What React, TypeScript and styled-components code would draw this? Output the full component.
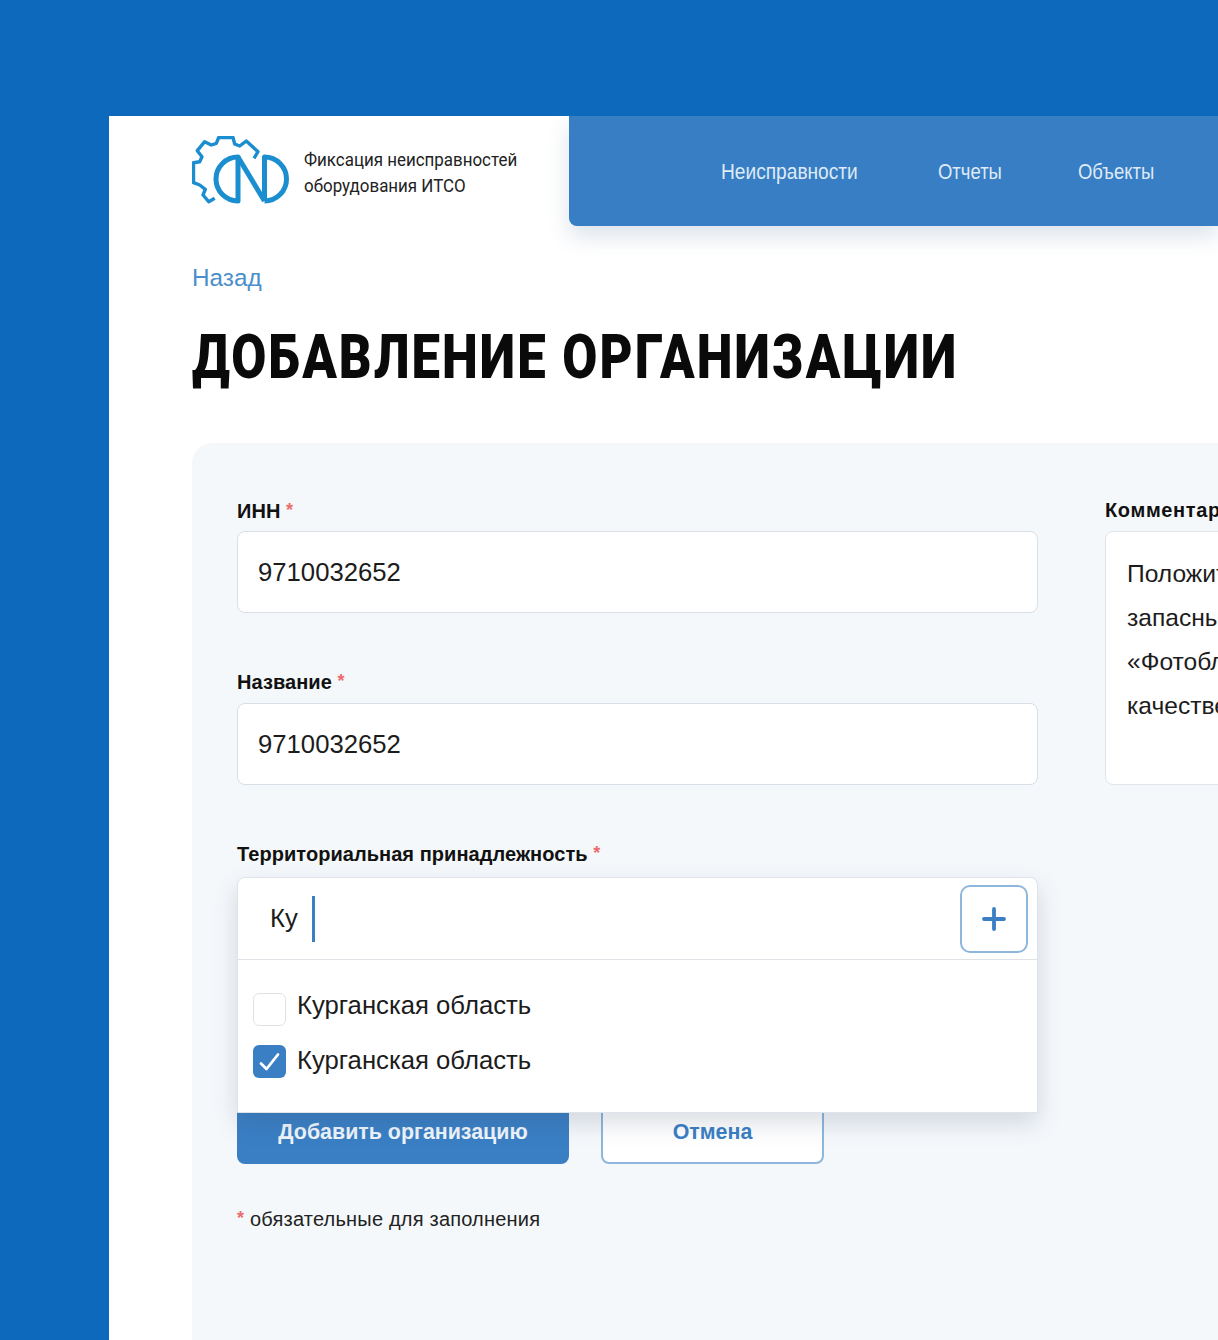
import React from "react";
import styled, { createGlobalStyle } from "styled-components";

const GlobalStyle = createGlobalStyle`
  html, body {
    margin: 0;
    padding: 0;
    background: #0d69bb;
  }
  body {
    font-family: "Liberation Sans", Arial, sans-serif;
    color: #111;
  }
`;

const Logo = () => (
  <svg width="98" height="70" viewBox="0 0 98 70" fill="none" stroke="#1b8ed0" strokeWidth="3.4" strokeLinejoin="round" style={{ flex: "none" }}>
    <path d="M22.7 62.3 L16.7 65.7 L11 59 L13.3 53.3 L7.7 49 L1.5 46.7 L1.5 26.7 L7.7 25.7 L10 20.7 L5.3 14.7 L12.7 5.7 L19.3 9 L24.3 7.3 L26.7 1.5 L41 1.5 L42.7 8 L47.7 10 L54.3 5 L66 15.7 L62 22.3" />
    <g strokeWidth="5">
      <path d="M46 21 A22 22 0 0 0 46 65 Z" />
      <path d="M46 21 L72.5 65" />
      <path d="M72.5 65 V21 A22 22 0 0 1 72.5 65" />
    </g>
  </svg>
);

const Check = () => (
  <svg width="33" height="33" viewBox="0 0 33 33" fill="none" stroke="#fff" strokeWidth="2.8" strokeLinecap="round" strokeLinejoin="round">
    <path d="M8 18.5 L13.5 24 L25 9.5" />
  </svg>
);

const Plus = () => (
  <svg width="24" height="24" viewBox="0 0 24 24" fill="none" stroke="#3a7fc4" strokeWidth="3.8" strokeLinecap="round">
    <path d="M12 2 V22 M2 12 H22" />
  </svg>
);

const App = () => (
  <Page>
    <GlobalStyle />
    <Sheet>
      <Header>
        <Brand>
          <Logo />
          <BrandText>
            Фиксация неисправностей
            <br />
            оборудования ИТСО
          </BrandText>
        </Brand>
        <Nav>
          <NavLink $wide>Неисправности</NavLink>
          <NavLink>Отчеты</NavLink>
          <NavLink>Объекты</NavLink>
        </Nav>
      </Header>
      <Content>
        <Back>Назад</Back>
        <Title>Добавление организации</Title>
        <Panel>
          <Columns>
            <Column>
              <Field>
                <Label>
                  ИНН <Star>*</Star>
                </Label>
                <Input>9710032652</Input>
              </Field>
              <Field>
                <Label $gap={10}>
                  Название <Star>*</Star>
                </Label>
                <Input>9710032652</Input>
              </Field>
              <SelectField>
                <Label $gap={12}>
                  Территориальная принадлежность <Star>*</Star>
                </Label>
                <Dropdown>
                  <SearchRow>
                    <SearchText>Ку</SearchText>
                    <Caret />
                    <AddButton>
                      <Plus />
                    </AddButton>
                  </SearchRow>
                  <Options>
                    <Option>
                      <Box />
                      <OptionText $lift={8}>Курганская область</OptionText>
                    </Option>
                    <Option>
                      <Box $checked>
                        <Check />
                      </Box>
                      <OptionText $lift={2}>Курганская область</OptionText>
                    </Option>
                  </Options>
                </Dropdown>
              </SelectField>
              <Actions>
                <PrimaryButton>Добавить организацию</PrimaryButton>
                <GhostButton>Отмена</GhostButton>
              </Actions>
              <Note>
                <Star>*</Star> обязательные для заполнения
              </Note>
            </Column>
            <Side>
              <CommentLabel>Комментарий</CommentLabel>
              <TextArea>
                <div>Положительный отзыв</div>
                <div>запасные части и ремонт</div>
                <div>«Фотоблок» высокого</div>
                <div>качестве</div>
              </TextArea>
            </Side>
          </Columns>
        </Panel>
      </Content>
    </Sheet>
  </Page>
);

export default App;

const Page = styled.div`
  width: 1218px;
  height: 1340px;
  overflow: hidden;
  padding: 116px 0 0 109px;
  box-sizing: border-box;
  background: #0d69bb;
`;

const Sheet = styled.div`
  width: 1109px;
  height: 1224px;
  background: #fff;
  overflow: hidden;
`;

const Header = styled.header`
  display: flex;
  height: 110px;
`;

const Brand = styled.div`
  width: 460px;
  flex: none;
  padding: 20px 0 0 83px;
  box-sizing: border-box;
  display: flex;
  align-items: flex-start;
  gap: 14px;
`;

const BrandText = styled.div`
  font-family: "Roboto", sans-serif;
  font-size: 18px;
  line-height: 26px;
  margin-top: 11px;
  color: #222;
  white-space: nowrap;
  transform: scaleX(0.94);
  transform-origin: left center;
`;

const Nav = styled.nav`
  flex: 1;
  height: 110px;
  background: #387ec4;
  border-radius: 0 0 0 8px;
  box-shadow: 0 10px 22px rgba(40, 80, 130, 0.16);
  display: grid;
  grid-template-columns: 217px 140px auto;
  align-items: center;
  padding: 2px 0 0 152px;
  box-sizing: border-box;
  white-space: nowrap;
`;

const NavLink = styled.a<{ $wide?: boolean }>`
  font-family: "Liberation Sans", Arial, sans-serif;
  font-size: 22px;
  color: #dfeaf6;
  transform: scaleX(${(p) => (p.$wide ? 0.87 : 0.84)});
  transform-origin: left center;
`;

const Content = styled.main`
  padding: 37px 0 0 83px;
`;

const Back = styled.a`
  display: block;
  font-size: 24.3px;
  line-height: 30px;
  color: #4a8fcb;
`;

const Title = styled.h1`
  margin: 28px 0 0;
  font-family: "Roboto", sans-serif;
  font-weight: 900;
  font-size: 62px;
  line-height: 72px;
  letter-spacing: 2.5px;
  text-transform: uppercase;
  color: #0a0a0a;
  white-space: nowrap;
  transform: scaleX(0.82);
  transform-origin: left center;
`;

const Panel = styled.section`
  margin-top: 50px;
  width: 1100px;
  height: 900px;
  background: #f5f8fb;
  border-radius: 20px 0 0 0;
  padding: 55px 0 0 45px;
  box-sizing: border-box;
`;

const Columns = styled.div`
  display: flex;
  gap: 67px;
`;

const Column = styled.div`
  width: 801px;
  flex: none;
`;

const Side = styled.div`
  width: 400px;
  flex: none;
`;

const Field = styled.div`
  margin-bottom: 56px;
`;

const SelectField = styled.div`
  position: relative;
  height: 259px;
  z-index: 2;
`;

const Label = styled.div<{ $gap?: number }>`
  height: 24px;
  font-size: 20px;
  line-height: 24px;
  font-weight: 700;
  letter-spacing: 0.05px;
  margin-bottom: ${(p) => p.$gap ?? 9}px;
  color: #111;
  white-space: nowrap;
`;

const CommentLabel = styled(Label)`
  letter-spacing: 0.65px;
`;

const Star = styled.span`
  color: #ec6c6c;
  font-weight: 700;
  font-size: 18px;
  vertical-align: 2px;
`;

const Input = styled.div`
  height: 82px;
  box-sizing: border-box;
  background: #fff;
  border: 1px solid #d9dfe7;
  border-radius: 8px;
  padding: 0 20px;
  display: flex;
  align-items: center;
  font-size: 25.7px;
  color: #1c1c1c;
`;

const Dropdown = styled.div`
  background: #fff;
  border: 1px solid #dfe4ea;
  border-radius: 8px 8px 0 0;
  box-shadow: 0 10px 24px rgba(50, 70, 100, 0.18);
  height: 236px;
  box-sizing: border-box;
`;

const SearchRow = styled.div`
  height: 82px;
  display: flex;
  align-items: center;
  padding: 0 9px 0 32px;
  border-bottom: 1px solid #dfe3e8;
  box-sizing: border-box;
`;

const SearchText = styled.span`
  font-size: 25.7px;
  color: #1c1c1c;
`;

const Caret = styled.span`
  width: 3px;
  height: 46px;
  background: #3a7fc4;
  margin-left: 14px;
`;

const AddButton = styled.button`
  margin-left: auto;
  width: 68px;
  height: 68px;
  background: #fff;
  border: 2px solid #8fb6dc;
  border-radius: 10px;
  display: flex;
  align-items: center;
  justify-content: center;
  padding: 0;
`;

const Options = styled.div`
  padding: 33px 0 0 15px;
  display: flex;
  flex-direction: column;
  gap: 19px;
`;

const Option = styled.label`
  display: flex;
  align-items: center;
  gap: 11px;
  height: 33px;
  font-size: 25.7px;
  color: #1c1c1c;
`;

const OptionText = styled.span<{ $lift: number }>`
  margin-bottom: ${(p) => p.$lift}px;
`;

const Box = styled.span<{ $checked?: boolean }>`
  width: 33px;
  height: 33px;
  box-sizing: border-box;
  border-radius: 6px;
  border: ${(p) => (p.$checked ? "0" : "1px solid #dfe3e8")};
  background: ${(p) => (p.$checked ? "#3a7fc4" : "#fff")};
  display: flex;
  align-items: center;
  justify-content: center;
`;

const Actions = styled.div`
  display: flex;
  gap: 32px;
`;

const PrimaryButton = styled.button`
  width: 332px;
  height: 64px;
  border: 0;
  border-radius: 8px;
  background: #3a7fc4;
  color: #f0f5fb;
  font: 700 21.4px "Liberation Sans", Arial, sans-serif;
  padding: 0;
`;

const GhostButton = styled.button`
  width: 223px;
  height: 64px;
  border: 2px solid #8fb6dc;
  border-radius: 8px;
  background: #fff;
  color: #3a7fc4;
  font: 700 21.4px "Liberation Sans", Arial, sans-serif;
  padding: 0;
`;

const Note = styled.div`
  height: 24px;
  margin-top: 42px;
  font-size: 20px;
  line-height: 24px;
  letter-spacing: 0.2px;
  color: #222;
`;

const TextArea = styled.div`
  height: 254px;
  box-sizing: border-box;
  background: #fff;
  border: 1px solid #e0e5eb;
  border-radius: 8px;
  padding: 20px 21px;
  font-size: 24.6px;
  line-height: 44px;
  color: #1c1c1c;
  white-space: nowrap;
`;
